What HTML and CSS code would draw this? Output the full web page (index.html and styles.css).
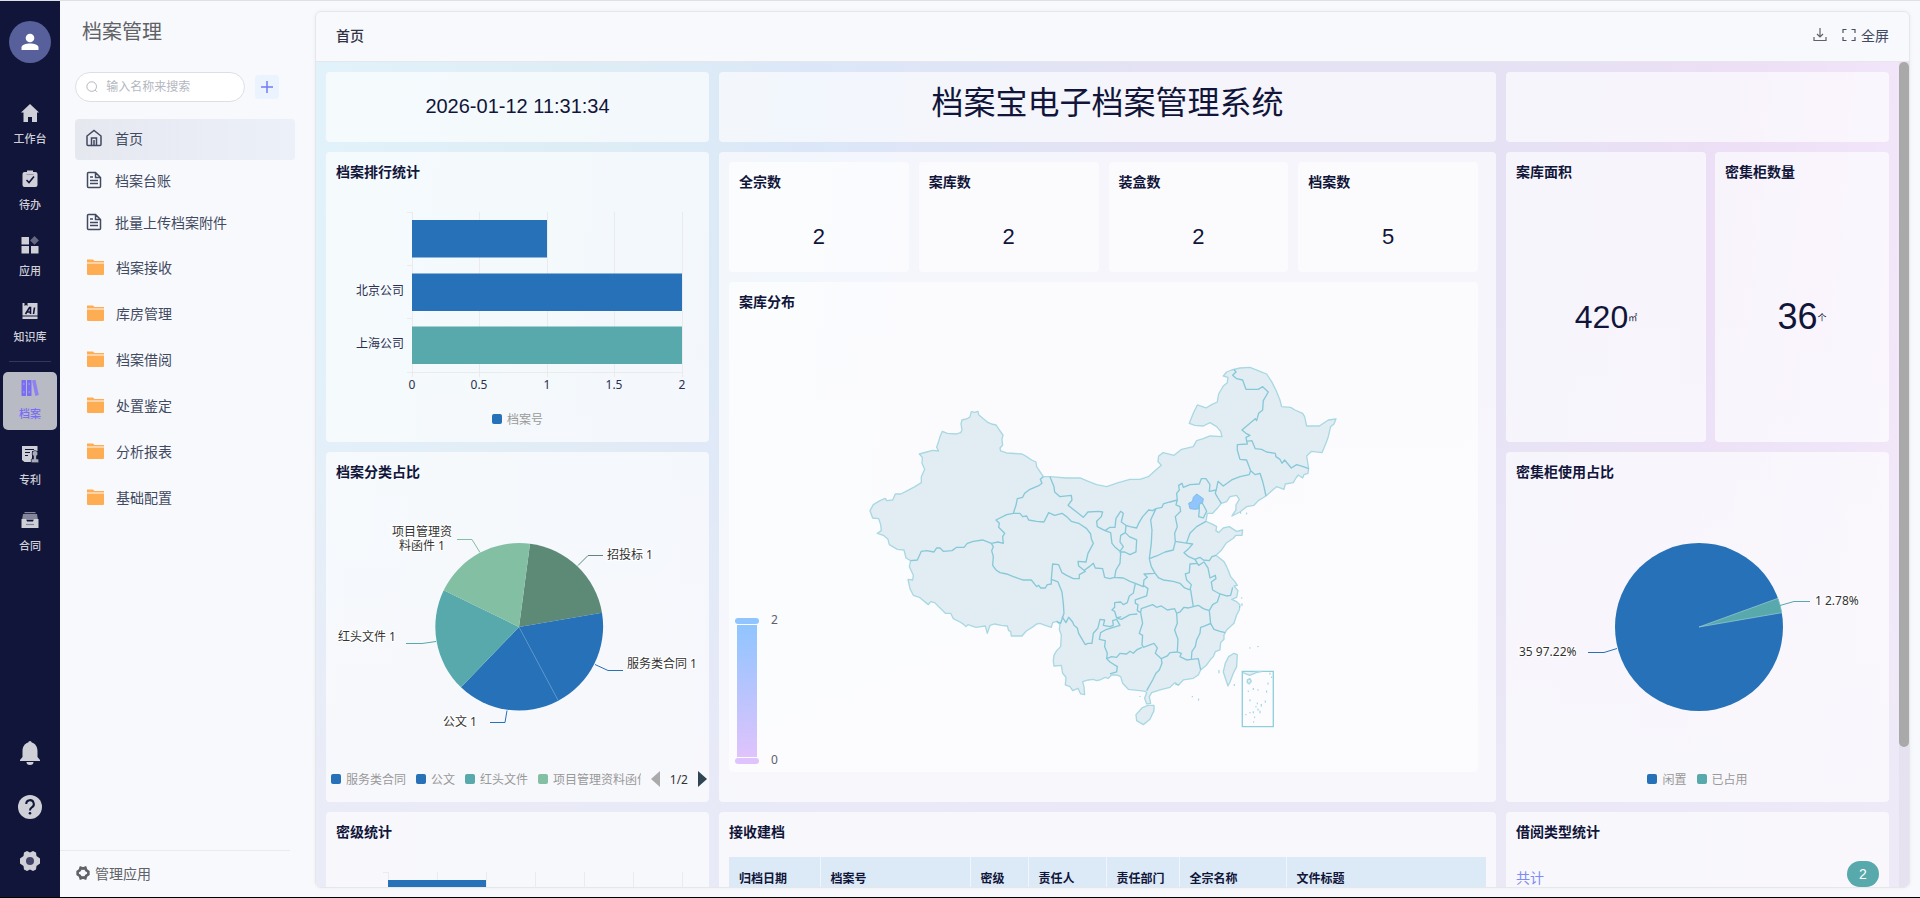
FILE: index.html
```
<!DOCTYPE html>
<html lang="zh-CN">
<head>
    <meta charset="UTF-8">
    <meta name="viewport" content="width=device-width, initial-scale=1.0">
    <title>档案管理</title>
    <link rel="stylesheet" href="styles.css">
</head>
<body>
    <nav class="rail">
        <button class="avatar" aria-label="个人中心">
            <svg width="18" height="18" viewBox="0 0 18 18" fill="#fff"><circle cx="9" cy="5" r="4.3"/><path d="M.5 17v-2.500C.5 12 5 10.600 9 10.600s8.500 1.400 8.500 3.900V17z"/></svg>
        </button>
        <a class="rail-item" href="#">
            <svg width="18" height="18" viewBox="0 0 18 18" fill="currentColor"><path d="M9 0 18 8.500h-2V18h-5v-5H7v5H2.500V8.500H0z"/></svg>
            <span>工作台</span>
        </a>
        <a class="rail-item" href="#">
            <svg width="18" height="18" viewBox="0 0 18 18"><path fill="currentColor" d="M3.500 2H6V.5h6V2h2.500a2 2 0 0 1 2 2v11a2 2 0 0 1-2 2h-11a2 2 0 0 1-2-2V4a2 2 0 0 1 2-2z"/><path d="M5.500 10 8 12.500l5-6" fill="none" stroke="#111539" stroke-width="1.600"/><path d="M5.500 4.500h7" stroke="#9a9bab"/></svg>
            <span>待办</span>
        </a>
        <a class="rail-item" href="#">
            <svg width="18" height="18" viewBox="0 0 18 18" fill="currentColor"><path d="M.5 1h7.500v7.500H.5zM.5 10h7.500v7.500H.5zM10 10h7.500v7.500H10z"/><path opacity=".45" d="m13.500 0 4.400 4.400-4.400 4.400-4.400-4.400z"/></svg>
            <span>应用</span>
        </a>
        <a class="rail-item" href="#">
            <svg width="18" height="18" viewBox="0 0 18 18"><path fill="currentColor" d="M1.500 1h2v3l1.500-1 1.500 1V1h10v12.500h-15zM1.500 14.500h15V17h-15z"/><path d="m4.500 12 4-6.500h1V12M6 10h3.500M13.500 5.500l-1 6.500" fill="none" stroke="#111539" stroke-width="1.600"/></svg>
            <span>知识库</span>
        </a>
        <hr class="rail-line">
        <a class="rail-item active" href="#">
            <svg width="18" height="18" viewBox="0 0 18 18"><path fill="#7a6df5" d="M.5 1H5v16H.5zM6 1h4.500v16H6z"/><path fill="#8f82f0" d="m11 1.500 3.500-.8L17.800 16l-3.500 1z"/><path d="M2 5h1.500M7.500 5H9M2 13h1.500M7.500 13H9" stroke="#b3b5c6"/></svg>
            <span>档案</span>
        </a>
        <a class="rail-item" href="#">
            <svg width="18" height="18" viewBox="0 0 18 18"><path fill="currentColor" d="M1 1h15.500v5H11v9l-1 2H3.500L1 15z"/><path d="M4 4.500h9M4 7.500h5M4 10.500h3" stroke="#111539" stroke-width="1.200"/><path fill="#a9aab8" stroke="#111539" stroke-width=".6" d="M14 5.500a3 3 0 0 1 1.500 5.500v3h2.200v3.700h-7.400V14h2.200v-3A3 3 0 0 1 14 5.500z"/></svg>
            <span>专利</span>
        </a>
        <a class="rail-item" href="#">
            <svg width="18" height="18" viewBox="0 0 18 18"><path fill="#85869a" d="M3.500 1h11v1.200h-11zM2 3h14l1 6H1z"/><path fill="currentColor" d="M.5 8H5l1 2.500h6L13 8h4.500v9H.5z"/><path d="M5 13.500h8" stroke="#85869a" stroke-width="1.200"/></svg>
            <span>合同</span>
        </a>
        <div class="rail-bottom">
            <button aria-label="通知"><svg width="24" height="24" viewBox="0 0 24 24" fill="currentColor"><path d="M12 0a2 2 0 0 1 1.800 1.500C17.500 2.500 19.500 6 19.500 10v6l2.500 3v1H2v-1l2.500-3v-6c0-4 2-7.500 5.700-8.500A2 2 0 0 1 12 0zM8.500 21h7a3.500 3 0 0 1-7 0z"/></svg></button>
            <button aria-label="帮助"><svg width="24" height="24" viewBox="0 0 24 24"><circle cx="12" cy="12" r="12" fill="currentColor"/><path d="M8.200 9a3.800 3.800 0 1 1 5.600 3.300c-1.300.8-1.800 1.400-1.800 3.200" fill="none" stroke="#111539" stroke-width="2"/><circle cx="12" cy="18.300" r="1.300" fill="#111539"/></svg></button>
            <button aria-label="设置"><svg width="24" height="24" viewBox="0 0 24 24"><path fill="currentColor" d="m9 2 3 1.500L15 2l3 1.500.5 3.500L22 9.500v5L18.500 17l-.5 3.500-3 1.500-3-1.500L9 22l-3-1.500L5.500 17 2 14.500v-5L5.500 7 6 3.500z"/><circle cx="12" cy="12" r="4" fill="#43466a"/></svg></button>
        </div>
    </nav>

    <aside class="sidebar">
        <h1>档案管理</h1>
        <div class="search-row">
            <label class="search">
                <svg width="14" height="14" viewBox="0 0 14 14" fill="none" stroke="#a8abb2"><circle cx="6.500" cy="6.500" r="5.500"/><path d="m10.500 10.500 2 2"/></svg>
                <input type="text" placeholder="输入名称来搜索" aria-label="搜索">
            </label>
            <button class="add" aria-label="新增"><svg width="12" height="12" viewBox="0 0 12 12" stroke="#6f7df7" stroke-width="1.500"><path d="M6 0v12M0 6h12"/></svg></button>
        </div>
        <ul class="menu">
            <li><a class="active" href="#"><svg width="18" height="18" viewBox="0 0 18 18" fill="none" stroke="#414a60" stroke-width="1.500"><path d="M2 7 9 1.500 16 7v8.500a1 1 0 0 1-1 1H3a1 1 0 0 1-1-1zM6.500 16V9h5v7M9 11v5"/></svg>首页</a></li>
            <li><a href="#"><svg width="18" height="18" viewBox="0 0 18 18" fill="none" stroke="#414a60" stroke-width="1.500"><path d="M10.500 1.500H3.500a1 1 0 0 0-1 1v13a1 1 0 0 0 1 1h11a1 1 0 0 0 1-1v-9zV6.500h5M5 6h3M5 9.500h8M5 12.500h8"/></svg>档案台账</a></li>
            <li><a href="#"><svg width="18" height="18" viewBox="0 0 18 18" fill="none" stroke="#414a60" stroke-width="1.500"><path d="M10.500 1.500H3.500a1 1 0 0 0-1 1v13a1 1 0 0 0 1 1h11a1 1 0 0 0 1-1v-9zV6.500h5M5 6h3M5 9.500h8M5 12.500h8"/></svg>批量上传档案附件</a></li>
            <li class="folder"><a href="#"><svg width="18" height="18" viewBox="0 0 18 18"><path fill="#ffad52" d="M1 1.500h6l1.500 1.500H18v1.500H1zM1 5.500h17V16a1 1 0 0 1-1 1H2a1 1 0 0 1-1-1z"/></svg>档案接收</a></li>
            <li class="folder"><a href="#"><svg width="18" height="18" viewBox="0 0 18 18"><path fill="#ffad52" d="M1 1.500h6l1.500 1.500H18v1.500H1zM1 5.500h17V16a1 1 0 0 1-1 1H2a1 1 0 0 1-1-1z"/></svg>库房管理</a></li>
            <li class="folder"><a href="#"><svg width="18" height="18" viewBox="0 0 18 18"><path fill="#ffad52" d="M1 1.500h6l1.500 1.500H18v1.500H1zM1 5.500h17V16a1 1 0 0 1-1 1H2a1 1 0 0 1-1-1z"/></svg>档案借阅</a></li>
            <li class="folder"><a href="#"><svg width="18" height="18" viewBox="0 0 18 18"><path fill="#ffad52" d="M1 1.500h6l1.500 1.500H18v1.500H1zM1 5.500h17V16a1 1 0 0 1-1 1H2a1 1 0 0 1-1-1z"/></svg>处置鉴定</a></li>
            <li class="folder"><a href="#"><svg width="18" height="18" viewBox="0 0 18 18"><path fill="#ffad52" d="M1 1.500h6l1.500 1.500H18v1.500H1zM1 5.500h17V16a1 1 0 0 1-1 1H2a1 1 0 0 1-1-1z"/></svg>分析报表</a></li>
            <li class="folder"><a href="#"><svg width="18" height="18" viewBox="0 0 18 18"><path fill="#ffad52" d="M1 1.500h6l1.500 1.500H18v1.500H1zM1 5.500h17V16a1 1 0 0 1-1 1H2a1 1 0 0 1-1-1z"/></svg>基础配置</a></li>
        </ul>
        <button class="manage">
            <svg width="16" height="16" viewBox="0 0 24 24"><path fill="none" stroke="#606266" stroke-width="4" d="m8.500 4 3.500 1.200L15.500 4l1.200 3.700L20 10v4l-3.300 2.300-1.200 3.700-3.500-1.200L8.500 20l-1.200-3.700L4 14v-4l3.300-2.300z"/></svg>
            管理应用
        </button>
    </aside>

    <main class="panel">
        <header class="panel-head">
            <h2>首页</h2>
            <div class="tools">
                <button aria-label="下载"><svg width="14" height="14" viewBox="0 0 14 14" fill="none" stroke="#606266" stroke-width="1.200"><path d="M7 0v9M4 6l3 3 3-3M1 9v3.500h12V9"/></svg></button>
                <button><svg width="14" height="14" viewBox="0 0 14 14" fill="none" stroke="#4c5160" stroke-width="1.200"><path d="M1 5V1.500h3.500M9.500 1.500H13V5M13 9v3.500H9.500M4.500 12.500H1V9"/></svg>全屏</button>
            </div>
        </header>
        <div class="board">
            <div class="grid">
                <section class="card clock"><time>2026-01-12 11:31:34</time></section>
                <section class="card banner">档案宝电子档案管理系统</section>
                <section class="card"></section>

                <section class="card">
                    <h3>档案排行统计</h3>
                    <svg class="chart" height="204" viewBox="0 0 383 204">
                        <path class="axis" d="M86.500 20v165M153.500 20v165M221.500 20v165M288.500 20v165M356.500 20v165M81 20.500h5M81 73.500h5M81 126.500h5M81 180.500h276"/>
                        <path class="blue" d="M86 28h135v37.500H86zM86 81.500h270v37.500H86z"/>
                        <path class="teal" d="M86 134.500h270V172H86z"/>
                        <g class="axis-text" text-anchor="end"><text x="78" y="103">北京公司</text><text x="78" y="156">上海公司</text></g>
                        <g class="axis-text" text-anchor="middle"><text x="86" y="197">0</text><text x="153" y="197">0.5</text><text x="221" y="197">1</text><text x="288" y="197">1.5</text><text x="356" y="197">2</text></g>
                    </svg>
                    <div class="legend"><span class="key">档案号</span></div>
                </section>

                <section class="card center">
                    <div class="stats">
                        <div class="box"><h3>全宗数</h3><p>2</p></div>
                        <div class="box"><h3>案库数</h3><p>2</p></div>
                        <div class="box"><h3>装盒数</h3><p>2</p></div>
                        <div class="box"><h3>档案数</h3><p>5</p></div>
                    </div>
                    <div class="box map-box">
                        <h3>案库分布</h3>
                        <svg class="chart" height="450" viewBox="0 0 749 450">
                            <defs>
                                <linearGradient id="range" x2="0" y2="1"><stop stop-color="#90c5ff"/><stop offset="1" stop-color="#dfc3fc"/></linearGradient>
                            </defs>
                            <rect x="6" y="296" width="24" height="6" rx="3" fill="#90c5ff"/>
                            <rect x="8" y="303" width="20" height="132" fill="url(#range)"/>
                            <rect x="6" y="436" width="24" height="6" rx="3" fill="#dfc3fc"/>
                            <g class="axis-text range-text"><text x="42" y="302">2</text><text x="42" y="442">0</text></g>
                            <g class="map" transform="translate(131 28) scale(.3333)">
                                <path class="land" d="M550 380 540 365 530 350 528 336 515 330 500 320 486 312 440 309 422 303 420 294 428 285 426 268 429 255 418 240 408 225 395 222 385 218 370 206 356 194 354 184 344 187 334 185 330 200 322 206 306 210 303 222 306 240 302 248 290 252 262 250 247 244 240 260 236 274 230 292 236 303 218 301 200 306 178 312 187 322 186 340 194 358 184 380 184 398 165 410 138 424 122 432 106 432 98 450 80 452 76 445 60 452 40 464 30 482 38 504 56 506 62 524 64 542 52 550 70 556 84 568 88 584 112 598 132 600 138 624 152 632 148 650 160 676 158 690 144 688 150 716 160 736 178 742 205 764 212 755 224 758 250 784 256 790 272 790 280 806 300 816 312 824 318 830 324 824 348 832 376 828 382 850 390 826 404 822 424 826 442 828 446 842 452 844 454 858 486 858 498 844 520 830 530 822 540 820 556 826 574 832 578 818 590 814 600 824 598 838 604 856 602 890 590 902 582 916 580 932 582 948 604 946 608 970 618 982 616 1005 630 1010 638 1022 654 1015 662 1032 674 1034 672 1010 668 995 685 990 700 988 710 992 720 990 735 982 745 985 755 975 770 975 782 980 788 1000 805 1018 840 1022 856 1024 860 1028 854 1045 860 1062 872 1060 868 1040 875 1028 900 1020 930 1012 945 998 955 1006 970 990 1000 985 1015 975 1022 960 1040 945 1052 928 1060 920 1066 905 1080 900 1082 878 1092 868 1092 855 1100 840 1122 820 1130 795 1138 780 1140 765 1130 755 1115 748 1130 742 1134 722 1122 708 1132 706 1125 695 1112 680 1106 664 1100 650 1092 635 1068 616 1085 600 1098 580 1120 565 1128 556 1146 556 1148 540 1130 544 1108 530 1090 534 1076 548 1068 542 1070 530 1060 524 1038 514 1042 490 1058 490 1072 475 1084 460 1100 455 1110 440 1130 436 1138 448 1128 465 1128 480 1116 498 1140 486 1160 470 1182 466 1195 452 1218 438 1238 420 1250 410 1272 418 1276 402 1300 398 1308 384 1315 375 1328 384 1332 374 1344 370 1346 355 1340 318 1355 304 1386 308 1398 280 1405 260 1412 230 1422 222 1428 207 1405 210 1378 228 1340 228 1334 200 1328 190 1305 180 1292 172 1265 170 1260 150 1250 125 1235 95 1220 72 1200 64 1170 52 1140 54 1115 60 1100 66 1090 78 1104 82 1102 98 1090 108 1076 132 1072 156 1055 164 1038 174 1012 165 1000 190 988 220 1005 226 1030 228 1050 218 1070 230 1082 244 1086 260 1050 258 1030 266 1010 272 1000 290 965 298 942 316 910 308 896 318 894 335 904 346 885 362 865 380 840 388 810 388 775 398 740 410 710 404 685 394 660 384 620 384 570 380z"/>
                                <path class="border" d="M550 380 541 388 546 400 535 408 524 412 510 418 494 430 488 442 472 446 468 466 460 490 440 494 408 510 418 520 416 532 434 550 428 560 430 580 414 576 394 580M152 632 172 630 184 604 200 602 222 606 230 594 240 594 250 604 276 602 290 592 312 592 322 580 340 574 368 570 394 580 400 590 395 602 400 620 398 646 408 660 420 668 440 672 460 680 488 690 514 690 530 710 536 706 542 714 556 714 562 704 574 702 574 688 594 696 606 726 610 760 612 790 602 820 590 814M460 490 480 490 488 500 500 498 506 510 530 514 552 516 566 488 584 496 606 490 620 500 634 514 656 520 680 536 692 552 694 566 700 580 684 610 678 636 654 634 656 648 676 664 658 674 658 686 640 686 620 676 606 668 596 644 578 642 574 688M570 380 582 410 584 426 600 440 634 436 636 450 624 466 650 486 670 502 684 486 716 484 728 486 724 500 710 514 712 530 735 542"/>
                                <!-- 东部各省 -->
                                <g transform="translate(660 0)">
                                    <path class="border" d="M75 542 90 532 105 532 108 505 122 484 130 490 124 516 138 526 150 530 170 534 176 520 188 500 206 480 218 482 228 476 246 472 250 462 270 456 292 450M75 542 92 548 96 580 104 590 120 604 122 612 120 640 108 660 104 682M120 604 130 590 120 576 122 556 136 548 138 526M136 548 148 560 170 570 168 606 150 614 134 606 120 606M14 660 28 650 40 640 46 654 68 656 74 682 90 686 104 682 130 684 150 694 166 700M228 476 212 510 216 540 214 580 208 626 230 618 255 606 280 600 286 574 284 550 292 530 286 500 302 484 300 470 288 465 292 450 290 430 298 420 296 406 306 400 310 412 330 404 358 402 364 386 378 386 390 404 388 424 408 420 406 430 414 444 424 460M408 424 414 394 430 408 455 390 480 380 508 374 512 362 500 330 480 328 472 300 472 284 502 282 498 262 510 256 498 250 486 240 510 220 526 206 530 212 536 190 548 180 550 152 565 126 548 110 535 118 498 118 488 90 470 86 458 76 468 66 462 58M498 274 516 272 526 296 545 298 560 306 586 310 588 320 600 328 606 340 614 330 634 354 650 344 670 350 686 356M512 362 526 374 540 370 548 394 552 410 558 438M378 514 350 530 330 550 320 578M286 574 310 578 338 582 326 596 312 608 326 620 345 628 360 622 370 630 388 632 396 620 408 616M345 628 352 640 330 642 328 668 316 672 320 690 334 704 330 720M208 626 214 650 224 668 236 684 250 690 280 694 300 700 314 714 330 720M224 670 192 672 202 682 192 690 190 710 166 700M190 706 204 716 200 738 166 750 166 760 174 764 172 782 182 788M166 700 160 730 148 738 142 758 130 764 122 756 104 758 104 772 96 780 104 784 110 804 124 800M172 792 150 794 124 808 110 804M182 788 184 776 218 764 230 772 244 768 262 780 284 776 290 790M332 720 336 745 340 770 326 774 312 772 300 786 290 790M340 770 355 766 370 776 388 782M345 628 356 646 372 636 384 654 390 684 406 676 408 686 394 696 398 720 420 732 440 738 452 736 458 712M420 732 412 756 398 764 388 782 392 820 402 838 420 844 436 848M392 820 375 828 362 832 360 850 350 870 346 890 336 904 334 928M290 790 292 820 284 840 294 868 292 906M182 788 188 820 178 850 188 856 186 884 190 892 222 880 232 894 226 910 244 926 262 918 270 908 292 906 304 910 300 920 320 930 334 928 355 926 362 960M244 926 246 940 238 960 228 970 218 990 200 1022M80 926 95 920 110 922 120 910 140 912 150 904 160 910 170 900 186 892M110 808 120 826 100 832 76 840 62 848 58 868 76 872 74 890 82 910 80 926 90 936 112 950 110 966 90 972M-54 800-42 818-34 802-22 816-18 826-8 834-4 850 16 884 24 880 36 880 40 850 54 834 60 808 74 810 70 826 90 830 100 826 98 812 110 808"/>
                                    <path class="tint" d="m350 432 20 14-2 12-12 6 2 12-12 2-16-2-4-16 12-6 2-12z"/>
                                    <path class="border" d="m358 462 8-4 6 10 8 16-10 20-14-4 2-20z"/>
                                    <path class="land" d="M462 910 472 914 470 950 460 970 450 996 444 1008 430 966 436 940 446 920zM222 1066 222 1082 210 1108 190 1124 170 1112 168 1094 186 1074 204 1066z"/>
                                    <path class="inset" d="M487 964h93v166h-93z"/>
                                    <path class="land" d="m489 968 20 8 20-8 18-4M502 990l8-4 4 8-6 8-6-4z"/>
                                    <path class="isles" d="M505 1022v4M520 1014v6M534 1018v4M560 1022v6M564 998v6M510 1048v6M524 1100v4M521 1114v4M498 1092v4M556 1052v6M544 1062v8M534 1076v6M528 1068v4M520 1084v6M540 1082v8M532 1058v5M510 1086v4M570 968v6M575 980v4M337 1038v4M356 1046v6M417 960v10M463 1002v6M483 744h4M486 760v8M479 768v6M500 488v5M482 486v5M508 894h4M532 890h4M286 1004h10M180 1038v3"/>
                                </g>
                            </g>
                        </svg>
                    </div>
                </section>

                <div class="pair">
                    <section class="card area"><h3>案库面积</h3><p>420<small>㎡</small></p></section>
                    <section class="card cabinet"><h3>密集柜数量</h3><p>36<small>个</small></p></section>
                </div>

                <section class="card">
                    <h3>档案分类占比</h3>
                    <svg class="chart" height="264" viewBox="0 0 383 264">
                        <path fill="#5c8a76" d="M193 135 204 51.700A84 84 0 0 1 276 120.700z"/>
                        <path class="blue" d="M193 135 276 120.700A84 84 0 0 1 232.300 208.700z"/>
                        <path class="blue" d="M193 135 232.300 208.700A84 84 0 0 1 135 195.300z"/>
                        <path class="teal" d="M193 135 135 195.300A84 84 0 0 1 117.700 98.300z"/>
                        <path fill="#82bfa3" d="M193 135 117.700 98.300A84 84 0 0 1 204 51.700z"/>
                        <path d="m193 135 39.300 73.700" stroke="#5f97cb" stroke-width=".7"/>
                        <g fill="none">
                            <path stroke="#82bfa3" d="M131 47.500h15l8 13"/>
                            <path stroke="#5c8a76" d="M277 63.500h-15l-10 10"/>
                            <path stroke="#2671b7" d="M297 178.500h-15l-13-6"/>
                            <path stroke="#2671b7" d="M164 230.500h15l2-12"/>
                            <path stroke="#57a9ab" d="M80 151.500h16l14-2"/>
                        </g>
                        <g class="pie-text">
                            <text x="96" y="44" text-anchor="middle">项目管理资</text>
                            <text x="96" y="58" text-anchor="middle">料函件 1</text>
                            <text x="281" y="67">招投标 1</text>
                            <text x="301" y="176">服务类合同 1</text>
                            <text x="117" y="234">公文 1</text>
                            <text x="12" y="149">红头文件 1</text>
                        </g>
                    </svg>
                    <div class="legend paged">
                        <div class="keys">
                            <span class="key">服务类合同</span><span class="key">公文</span><span class="key key-teal">红头文件</span><span class="key key-green">项目管理资料函件</span>
                        </div>
                        <button class="prev" aria-label="上一页" disabled></button>
                        <span>1/2</span>
                        <button class="next" aria-label="下一页"></button>
                    </div>
                </section>

                <section class="card">
                    <h3>密集柜使用占比</h3>
                    <svg class="chart" height="264" viewBox="0 0 383 264">
                        <circle class="blue" cx="193" cy="135" r="84"/>
                        <path class="teal" stroke="#9fcbd6" stroke-width=".7" d="M193 135 272 106.300A84 84 0 0 1 275.800 120.700z"/>
                        <g fill="none">
                            <path stroke="#57a9ab" d="M304 109.500h-16l-14 4"/>
                            <path stroke="#2671b7" d="M82 160.500h16l13-4"/>
                        </g>
                        <g class="pie-text"><text x="309" y="113">1 2.78%</text><text x="13" y="164">35 97.22%</text></g>
                    </svg>
                    <div class="legend"><span class="key">闲置</span><span class="key key-teal">已占用</span></div>
                </section>

                <section class="card">
                    <h3>密级统计</h3>
                    <svg class="chart" height="196" viewBox="0 0 383 196">
                        <path class="axis" d="M62.500 20v150M111.500 20v150M160.500 20v150M209.500 20v150M258.500 20v150M307.500 20v150M356.500 20v150M57 20.500h5"/>
                        <path class="blue" d="M62 28h98v50H62z"/>
                    </svg>
                </section>
                <section class="card">
                    <h3>接收建档</h3>
                    <div class="table-wrap">
                        <table>
                            <colgroup><col class="w-date"><col class="w-no"><col class="w-level"><col class="w-person"><col class="w-dept"><col class="w-name"><col></colgroup>
                            <thead><tr><th>归档日期</th><th>档案号</th><th>密级</th><th>责任人</th><th>责任部门</th><th>全宗名称</th><th>文件标题</th></tr></thead>
                        </table>
                    </div>
                </section>
                <section class="card">
                    <h3>借阅类型统计</h3>
                    <div class="total"><a href="#">共计</a><span class="count">2</span></div>
                </section>
            </div>
            <div class="scrollbar"><div class="thumb"></div></div>
        </div>
    </main>
</body>
</html>
```
FILE: styles.css
```
* {
    box-sizing: border-box;
}
body {
    margin: 0;
    height: 100vh;
    display: flex;
    overflow: hidden;
    font-family: "Liberation Sans", "Noto Sans CJK SC", sans-serif;
    font-size: 14px;
    color: #414a60;
    background: #f8f9fd;
    border-top: 1px solid #dfe2e2;
    border-bottom: 1px solid #000;
}
h1, h2, h3, p, ul {
    margin: 0;
    padding: 0;
    font-weight: normal;
}
a {
    color: inherit;
    text-decoration: none;
}
button {
    display: flex;
    align-items: center;
    justify-content: center;
    padding: 0;
    border: none;
    background: none;
    color: inherit;
    font: inherit;
    cursor: pointer;
}

/* 左侧导航 */
.rail {
    width: 60px;
    flex-shrink: 0;
    display: flex;
    flex-direction: column;
    align-items: center;
    padding: 20px 3px;
    background: #111539;
    color: #cfcfd8;
}
.avatar {
    width: 42px;
    height: 42px;
    margin-bottom: 34px;
    border-radius: 50%;
    background: #57609a;
}
.rail-item {
    width: 54px;
    height: 58px;
    margin-bottom: 8px;
    padding-top: 7px;
    display: flex;
    flex-direction: column;
    align-items: center;
    gap: 9px;
    border-radius: 5px;
    font-size: 11px;
    line-height: 16px;
    font-weight: 500;
}
.rail-item svg {
    flex-shrink: 0;
}
.rail-item.active {
    background: #b8bac4;
    color: #7a6df5;
}
.rail-line {
    width: 42px;
    height: 1px;
    margin: 0 0 10px;
    border: none;
    background: #33375a;
}
.rail-bottom {
    margin-top: auto;
    margin-bottom: 4px;
    display: flex;
    flex-direction: column;
    gap: 30px;
}

/* 菜单 */
.sidebar {
    width: 255px;
    flex-shrink: 0;
    display: flex;
    flex-direction: column;
}
.sidebar h1 {
    padding: 16px 22px 14px;
    font-size: 20px;
    line-height: 30px;
    color: #606266;
}
.search-row {
    display: flex;
    align-items: center;
    gap: 10px;
    margin: 11px 15px 17px;
}
.search {
    display: flex;
    align-items: center;
    gap: 6px;
    width: 170px;
    height: 30px;
    padding: 0 10px;
    border: 1px solid #dcdfe6;
    border-radius: 15px;
    background: #fff;
}
.search input {
    width: 100%;
    min-width: 0;
    border: none;
    outline: none;
    background: none;
    font: inherit;
    font-size: 12px;
}
.search input::placeholder {
    color: #b4b7bf;
}
.add {
    width: 24px;
    height: 24px;
    border-radius: 4px;
    background: #ebf3ff;
}
.menu {
    flex: 1;
    margin: 0 20px 0 15px;
    list-style: none;
}
.menu a {
    display: flex;
    align-items: center;
    gap: 12px;
    height: 41px;
    margin-bottom: 1px;
    padding: 0 0 3px 10px;
    border-radius: 4px;
}
.menu a.active {
    background: linear-gradient(90deg, #e6e8f0, #ecf0f8);
}
.menu .folder a {
    height: 46px;
    margin: 0;
    padding: 0 0 2px 11px;
}
.manage {
    justify-content: flex-start;
    gap: 4px;
    height: 47px;
    margin-right: 25px;
    padding: 0 0 2px 15px;
    border-top: 1px solid #e8eaee;
    color: #606266;
}

/* 主面板 */
.panel {
    flex: 1;
    min-width: 0;
    margin: 10px 10px 9px 0;
    display: flex;
    flex-direction: column;
    border: 1px solid #e6e7eb;
    border-radius: 6px;
    overflow: hidden;
    box-shadow: 0 0 4px rgba(0,0,0,0.05);
}
.panel-head {
    display: flex;
    align-items: center;
    justify-content: space-between;
    height: 50px;
    padding: 0 20px 3px;
    border-bottom: 1px solid #e6e7eb;
}
.panel-head h2 {
    font-size: 14px;
    font-weight: 500;
    color: #303442;
}
.tools {
    display: flex;
    gap: 15px;
}
.tools button {
    gap: 5px;
}
.board {
    flex: 1;
    min-height: 0;
    display: flex;
    overflow: hidden;
    background:
        linear-gradient(180deg, rgba(236,234,247,0) 30%, rgba(236,234,247,0.8) 90%),
        linear-gradient(95deg, #e2f2fa, #deedf5 16%, #dbe7f8 30%, #e4e2f4 50%, #e5e2f4 70%, #ecdff6 85%, #f4e8fa);
}
.scrollbar {
    width: 10px;
    background: rgba(0,0,0,0.03);
}
.thumb {
    height: 83%;
    border-radius: 5px;
    background: #a9a9a9;
}
.grid {
    flex: 1;
    min-width: 0;
    display: grid;
    grid-template-columns: 383fr 777fr 383fr;
    grid-template-rows: 70px 290px 350px 236px;
    gap: 10px;
    padding: 10px;
}
.card {
    min-width: 0;
    border-radius: 4px;
    background: rgba(255,255,255,0.65);
    color: #111539;
    overflow: hidden;
}
.card h3 {
    padding-left: 10px;
    font-size: 14px;
    line-height: 40px;
    font-weight: bold;
}
.clock {
    display: flex;
    align-items: center;
    justify-content: center;
    padding-bottom: 2px;
    font-size: 20px;
}
.banner {
    font-size: 32px;
    line-height: 62px;
    text-align: center;
}
.chart {
    display: block;
    width: 100%;
}
.axis {
    stroke: #ebebed;
    fill: none;
}
.blue {
    fill: #2671b7;
}
.teal {
    fill: #57a9ab;
}
.axis-text, .pie-text {
    font-family: "Noto Sans", "Noto Sans CJK SC", sans-serif;
    font-size: 12px;
    fill: #2c3052;
}
.range-text {
    fill: #5c6070;
}
.pie-text {
    fill: #333;
    stroke: #fff;
    stroke-width: 2px;
    paint-order: stroke;
}
.legend {
    display: flex;
    align-items: center;
    justify-content: center;
    gap: 10px;
    height: 46px;
    font-family: "Noto Sans", "Noto Sans CJK SC", sans-serif;
    font-size: 12px;
    color: #999;
}
.key {
    display: flex;
    align-items: center;
    gap: 5px;
    white-space: nowrap;
}
.key::before {
    content: "";
    width: 10px;
    height: 10px;
    border-radius: 2px;
    background: #2671b7;
}
.key-teal::before {
    background: #57a9ab;
}
.key-green::before {
    background: #82bfa3;
}
.paged {
    padding: 0 2px 0 5px;
    color: #333;
}
.keys {
    flex: 1;
    min-width: 0;
    display: flex;
    gap: 10px;
    overflow: hidden;
    color: #999;
}
.prev, .next {
    width: 0;
    height: 0;
    border: 8px solid transparent;
}
.prev {
    border-left: none;
    border-right: 9px solid #aaa;
}
.next {
    border-right: none;
    border-left: 9px solid #2f4554;
}

/* 中间统计和地图 */
.center {
    grid-row: 2 / 4;
    grid-column: 2;
    padding: 10px 18px 30px 10px;
}
.stats {
    display: grid;
    grid-template-columns: repeat(4, 1fr);
    gap: 10px;
    margin-bottom: 10px;
}
.box {
    height: 110px;
    border-radius: 4px;
    background: rgba(255,255,255,0.6);
}
.box p {
    font-size: 22px;
    line-height: 70px;
    text-align: center;
}
.map-box {
    height: 490px;
}
.land, .border {
    fill: #e1edf3;
    stroke: #a9d8e2;
    stroke-width: 4;
    stroke-linejoin: round;
}
.border {
    fill: none;
    stroke: #87c8d8;
}
.tint {
    fill: #90c5ff;
    stroke: #7ebce4;
    stroke-width: 3;
}
.inset, .isles {
    fill: none;
    stroke: #8fcfdc;
    stroke-width: 4;
}
.isles {
    stroke-width: 3;
}
.pair {
    display: grid;
    grid-template-columns: 200fr 174fr;
    gap: 9px;
}
.pair p {
    display: flex;
    align-items: center;
    justify-content: center;
    height: 250px;
    font-size: 32px;
}
.pair .cabinet p {
    font-size: 36px;
}
.pair small {
    font-size: 9px;
}

/* 底部表格 */
.table-wrap {
    padding: 5px 10px;
}
table {
    width: 100%;
    table-layout: fixed;
    border-collapse: collapse;
    font-size: 12px;
}
th {
    height: 40px;
    padding: 0 10px;
    border-left: 1px solid #f1f5fb;
    background: #dceaf7;
    font-weight: bold;
    text-align: left;
    white-space: nowrap;
}
th:first-child {
    border-left: none;
}
.w-date {
    width: 91px;
}
.w-no {
    width: 150px;
}
.w-level {
    width: 58px;
}
.w-person {
    width: 78px;
}
.w-dept {
    width: 73px;
}
.w-name {
    width: 107px;
}
.total {
    display: flex;
    align-items: flex-start;
    justify-content: space-between;
    padding: 9px 10px;
}
.total a {
    padding-top: 6px;
    color: #7b8cf7;
}
.count {
    width: 32px;
    border-radius: 13px;
    background: #57a9ab;
    color: #fff;
    line-height: 26px;
    text-align: center;
}
```
